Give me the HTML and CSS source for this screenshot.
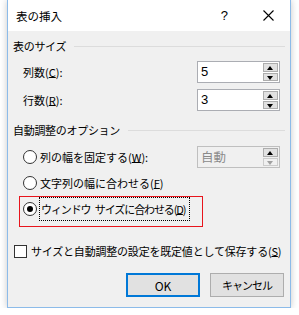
FILE: index.html
```html
<!DOCTYPE html>
<html lang="ja">
<head>
    <meta charset="UTF-8">
    <title>表の挿入</title>
    <link rel="stylesheet" href="styles.css">
</head>
<body>
    <div class="dialog">
        <div class="titlebar">
            <span class="title">表の挿入</span>
            <span class="help">?</span>
            <svg class="close" width="11" height="11" viewBox="0 0 11 11">
                <path d="M0.5 0.5 L10.5 10.5 M10.5 0.5 L0.5 10.5" stroke="#000" stroke-width="1.1" fill="none"/>
            </svg>
        </div>

        <div class="content">
            <div class="group-head first">
                <span>表のサイズ</span>
                <div class="rule"></div>
            </div>

            <div class="field-row first">
                <span class="label">列数(<u>C</u>):</span>
                <div class="spin">
                    <span class="value">5</span>
                    <div class="spin-btns">
                        <div class="arrow up"></div>
                        <div class="arrow down"></div>
                    </div>
                </div>
            </div>
            <div class="field-row">
                <span class="label">行数(<u>R</u>):</span>
                <div class="spin">
                    <span class="value">3</span>
                    <div class="spin-btns">
                        <div class="arrow up"></div>
                        <div class="arrow down"></div>
                    </div>
                </div>
            </div>

            <div class="group-head second">
                <span>自動調整のオプション</span>
                <div class="rule"></div>
            </div>

            <div class="radio-row first">
                <span class="radio"></span>
                <span class="label">列の幅を固定する(<u>W</u>):</span>
                <div class="spin disabled">
                    <span class="value">自動</span>
                    <div class="spin-btns">
                        <div class="arrow up"></div>
                        <div class="arrow down"></div>
                    </div>
                </div>
            </div>
            <div class="radio-row">
                <span class="radio"></span>
                <span class="label">文字列の幅に合わせる(<u>F</u>)</span>
            </div>
            <div class="highlight">
                <div class="radio-row checked">
                    <span class="radio"></span>
                    <span class="label focus">ウィンドウ サイズに合わせる(<u>D</u>)</span>
                </div>
            </div>

            <div class="check-row">
                <span class="checkbox"></span>
                <span class="label tight">サイズと自動調整の設定を既定値として保存する(<u>S</u>)</span>
            </div>

            <div class="buttons">
                <button type="button" class="btn default">OK</button>
                <button type="button" class="btn kana">キャンセル</button>
            </div>
        </div>
    </div>
</body>
</html>
```

FILE: styles.css
```css
body {
    margin: 0;
    background: #ffffff;
    font-family: 'Noto Sans CJK JP', 'Liberation Sans', sans-serif;
    font-size: 11px;
    color: #000;
    overflow: hidden;
}
.dialog {
    margin-left: 7px;
    width: 282px;
    border: 1px solid #8cbbe9;
    border-top: none;
    background: #f0f0f0;
    box-shadow: 0 0 7px rgba(0, 0, 0, 0.22);
}

/* タイトルバー */
.titlebar {
    display: flex;
    align-items: center;
    height: 31px;
    background: #fff;
    padding-left: 8px;
}
.titlebar .title {
    font-size: 11.5px;
    line-height: 16px;
    margin-top: 1px;
}
.titlebar .help {
    margin-left: auto;
    font-family: 'Liberation Sans', sans-serif;
    font-size: 13px;
    line-height: 16px;
}
.titlebar .close {
    margin-left: 35px;
    margin-right: 16px;
}

.content {
    padding-bottom: 10px;
}

/* グループ見出し */
.group-head {
    display: flex;
    align-items: center;
    height: 18px;
    padding-left: 5px;
    padding-right: 5px;
    font-size: 11px;
    letter-spacing: -0.3px;
}
.group-head.first { margin-top: 6px; }
.group-head.second { margin-top: 10px; }
.group-head .rule {
    flex: 1;
    height: 1px;
    background: #dcdcdc;
    margin-left: 8px;
}

.label {
    font-size: 11px;
    line-height: 16px;
    white-space: pre;
}
.label.tight { letter-spacing: -0.2px; }
u {
    text-decoration-thickness: 1px;
    text-underline-offset: 0px;
}

/* スピンボックス */
.field-row {
    display: flex;
    align-items: center;
    height: 22px;
    margin-top: 6px;
    padding-left: 15px;
}
.spin {
    display: flex;
    margin-left: auto;
    margin-right: 10px;
    width: 81px;
    height: 20px;
    border: 1px solid #abadb3;
    background: #fff;
}
.spin .value {
    flex: 1;
    padding-left: 3px;
    font-family: 'Liberation Sans', 'Noto Sans CJK JP', sans-serif;
    font-size: 13px;
    line-height: 20px;
}
.spin-btns {
    display: flex;
    flex-direction: column;
    width: 15px;
    margin: 1px 1px 1px 0;
    gap: 1px;
}
.arrow {
    flex: 1;
    background: #e1e1e1;
    border: 1px solid #adadad;
    position: relative;
}
.arrow::after {
    content: '';
    position: absolute;
    left: 3px;
    top: 2px;
    border-left: 3.5px solid transparent;
    border-right: 3.5px solid transparent;
}
.arrow.up::after { border-bottom: 4px solid #000; }
.arrow.down::after { border-top: 4px solid #000; }

.spin.disabled {
    background: #f0f0f0;
    border-color: #bfbfbf;
}
.spin.disabled .value {
    font-family: 'Noto Sans CJK JP', sans-serif;
    color: #8a8a8a;
    font-size: 12.5px;
}
.spin.disabled .arrow.down {
    background: #f0f0f0;
    border-color: #cccccc;
}
.spin.disabled .arrow.down::after { border-top-color: #a0a0a0; }

/* ラジオボタン */
.radio-row {
    display: flex;
    align-items: center;
    height: 20px;
    margin-top: 6px;
    padding-left: 15px;
}
.radio-row.first { margin-top: 8px; }
.radio {
    width: 12px;
    height: 12px;
    border: 1px solid #333;
    border-radius: 50%;
    background: #fff;
    margin-right: 3px;
    position: relative;
    flex: none;
}
.radio-row.checked .radio::after {
    content: '';
    position: absolute;
    left: 3px;
    top: 3px;
    width: 6px;
    height: 6px;
    border-radius: 50%;
    background: #000;
}
.highlight {
    margin-top: 3px;
    margin-left: 11px;
    width: 182px;
    border: 1px solid #e8141c;
    padding-bottom: 5px;
}
.highlight .radio-row {
    margin-top: 0;
    height: 24px;
    padding-left: 3px;
}
.label.focus {
    outline: 1px dotted #000;
    padding: 3px 4px 3px 1px;
    letter-spacing: -1.1px;
    word-spacing: 3px;
}

/* チェックボックス */
.check-row {
    display: flex;
    align-items: center;
    height: 18px;
    margin-top: 15px;
    padding-left: 6px;
}
.checkbox {
    width: 11px;
    height: 11px;
    border: 1px solid #333;
    background: #fff;
    margin-right: 4px;
    flex: none;
}

/* ボタン */
.buttons {
    display: flex;
    justify-content: flex-end;
    gap: 10px;
    margin-top: 13px;
    padding-right: 6px;
}
.btn {
    width: 74px;
    height: 24px;
    background: #e1e1e1;
    border: 1px solid #adadad;
    font-family: 'Noto Sans CJK JP', sans-serif;
    font-size: 12px;
    padding: 0;
    color: #000;
}
.btn.kana {
    font-size: 11px;
    letter-spacing: -1px;
}
.btn.default {
    border: 2px solid #0078d7;
}
```
